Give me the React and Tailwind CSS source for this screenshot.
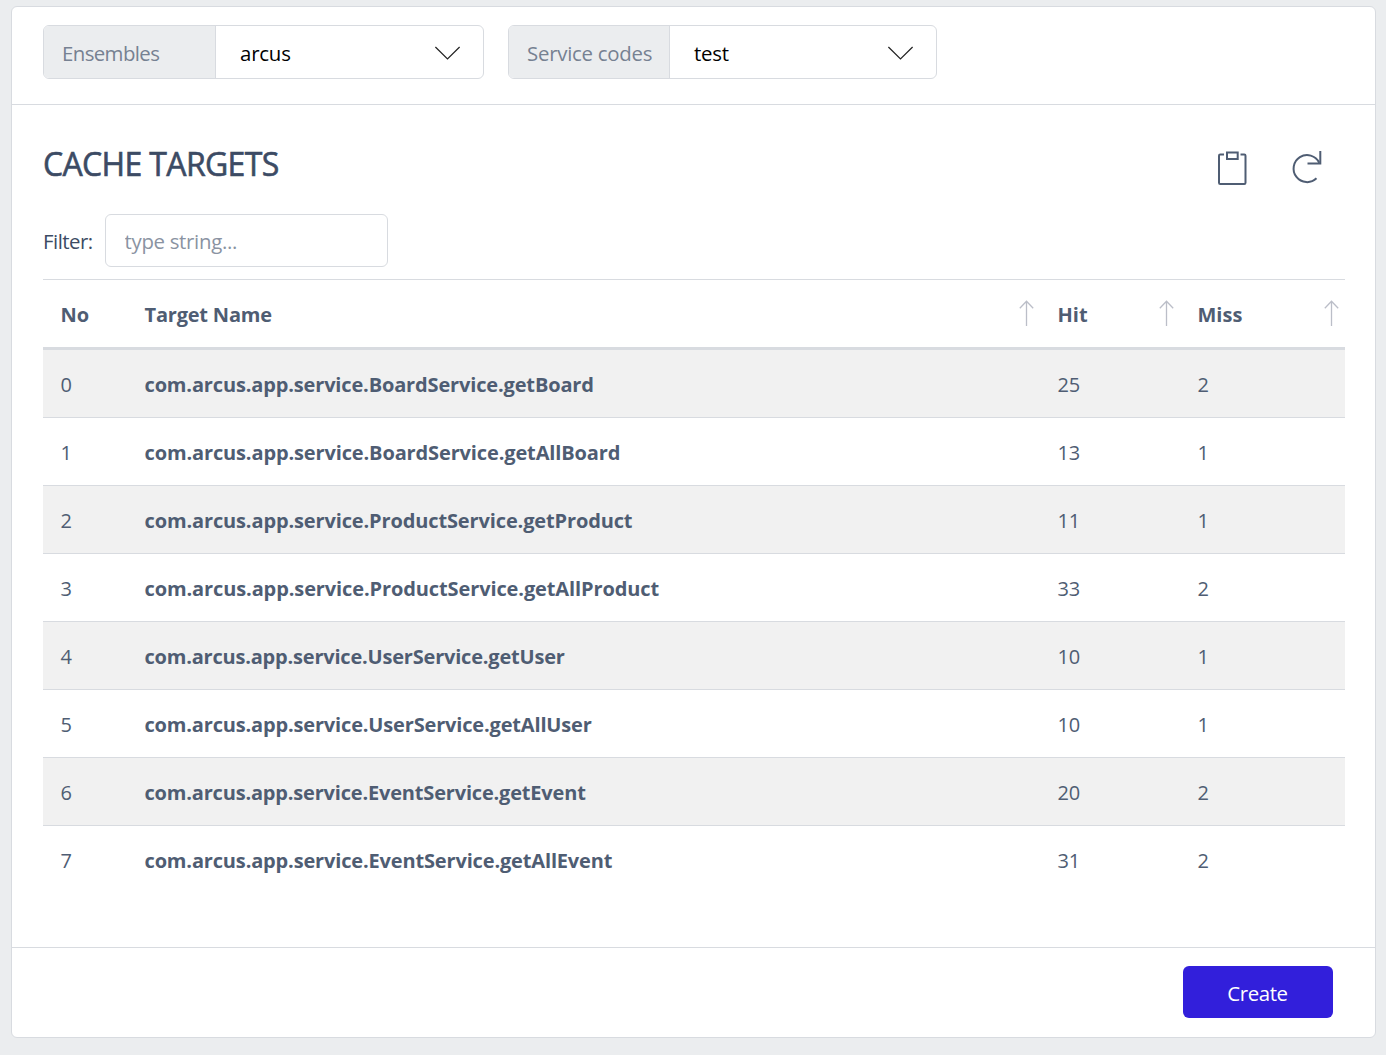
import React from "react";

const rows = [
  ["com.arcus.app.service.BoardService.getBoard", 25, 2, "tracking-[-0.15px]"],
  ["com.arcus.app.service.BoardService.getAllBoard", 13, 1, "tracking-[-0.13px]"],
  ["com.arcus.app.service.ProductService.getProduct", 11, 1, "tracking-[-0.13px]"],
  ["com.arcus.app.service.ProductService.getAllProduct", 33, 2, "tracking-[-0.11px]"],
  ["com.arcus.app.service.UserService.getUser", 10, 1, "tracking-[-0.2px]"],
  ["com.arcus.app.service.UserService.getAllUser", 10, 1, "tracking-[-0.165px]"],
  ["com.arcus.app.service.EventService.getEvent", 20, 2, "tracking-[-0.18px]"],
  ["com.arcus.app.service.EventService.getAllEvent", 31, 2, "tracking-[-0.155px]"],
];

function SelectGroup({ label, value, width, labelWidth }) {
  return (
    <div className={`flex h-[54px] rounded-[6px] border border-[#d8dbe0] overflow-hidden ${width}`}>
      <div className={`flex items-center border-r border-[#d8dbe0] bg-[#ebedef] pl-[18px] pt-[1px] text-[#768192] ${labelWidth}`}>
        <span className="whitespace-nowrap">{label}</span>
      </div>
      <div className="flex flex-1 items-center justify-between pl-[24px] pr-[22px] text-black">
        <span className="pt-[1px] tracking-[-0.2px]">{value}</span>
        <svg className="mt-[2px]" width="28" height="16" viewBox="0 0 28 16" fill="none" stroke="#222" strokeWidth="1.2">
          <path d="M2.400 2 14.500 14 26.600 2" />
        </svg>
      </div>
    </div>
  );
}

function SortArrow() {
  return (
    <svg className="-mt-[2px]" width="16" height="28" viewBox="0 0 16 28" fill="none" stroke="#bbbec8" strokeWidth="1.3">
      <path d="M8.500 2V27M1.800 9.200 8.500 2.300 15.200 9.200" />
    </svg>
  );
}

const cols = "grid grid-cols-[84px_913px_140px_165px]";

export default function App() {
  return (
    <div className="h-[1055px] w-[1386px] bg-[#ebedef] pl-[11px] pt-[6px] font-['Open_Sans','Noto_Sans',sans-serif] text-[20.4px] leading-[30px] text-[#3c4b64]">
      <div className="flex h-[1032px] w-[1365px] flex-col rounded-[6px] border border-[#d8dbe0] bg-white">
        <header className="flex h-[98px] gap-6 border-b border-[#d8dbe0] pl-[31px] pt-[18px]">
          <SelectGroup label="Ensembles" value="arcus" width="w-[441px]" labelWidth="w-[172px] tracking-[-0.6px]" />
          <SelectGroup label="Service codes" value="test" width="w-[429px]" labelWidth="w-[161px] tracking-[-0.25px]" />
        </header>

        <main className="flex flex-1 flex-col pl-[31px] pr-[30px]">
          <div className="flex h-[109px] justify-between">
            <h1 className="pt-[38px] text-[32px] font-medium leading-[42px] tracking-[-0.65px] [-webkit-text-stroke:0.6px_#3c4b64]">CACHE TARGETS</h1>
            <div className="flex gap-[44px] pr-[22px] pt-[45px]">
              <svg width="32" height="36" viewBox="0 0 32 36" fill="none" stroke="#4f5d73" strokeWidth="2">
                <path d="M9 4.500H5.200Q4 4.500 4 5.700V32.800Q4 34 5.200 34H29.300Q30.500 34 30.500 32.800V5.700Q30.500 4.500 29.300 4.500H25.500" />
                <path d="M12 2.500H22.700V9H12Z" />
              </svg>
              <svg width="32" height="36" viewBox="0 0 32 36" fill="none" stroke="#4f5d73" strokeWidth="2">
                <path d="M25.500 28.300A13.500 13.500 0 1 1 28.200 12.700" />
                <path d="M29.300 1V13.500H16.500" />
              </svg>
            </div>
          </div>
          <div className="flex h-[53px] items-center">
            <label className="w-[62px] pt-[1px] tracking-[-0.5px]">Filter:</label>
            <input
              className="h-[53px] w-[283px] rounded-[6px] border border-[#d8dbe0] bg-white pl-[18.5px] pt-[1px] tracking-[-0.3px] outline-none placeholder:text-[#8a93a2] placeholder:opacity-100"
              placeholder="type string..."
            />
          </div>

          <section className="mt-[12px] border-t border-[#d8dbe0] text-[#4f5d73]">
            <div className={`${cols} h-[70px] items-center border-b-[3px] border-[#d8dbe0] text-[20px] font-bold`}>
              <div className="pl-[17.5px] pt-[3px]">No</div>
              <div className="flex items-center justify-between pl-[17.5px] pr-[6px]">
                <span className="pt-[3px] tracking-[-0.2px]">Target Name</span>
                <SortArrow />
              </div>
              <div className="flex items-center justify-between pl-[17.5px] pr-[6px]">
                <span className="pt-[3px]">Hit</span>
                <SortArrow />
              </div>
              <div className="flex items-center justify-between pl-[17.5px] pr-[6px]">
                <span className="pt-[3px]">Miss</span>
                <SortArrow />
              </div>
            </div>
            {rows.map(([name, hit, miss, tracking], i) => (
              <div
                key={name}
                className={`${cols} h-[68px] items-center border-b pt-[3px] text-[20px] ${i % 2 ? "bg-white" : "bg-[#f1f1f1]"} ${i < 7 ? "border-[#d8dbe0]" : "border-transparent"}`}
              >
                <div className="pl-[17.5px]">{i}</div>
                <div className={`pl-[17.5px] font-bold ${tracking}`}>{name}</div>
                <div className="pl-[17.5px] tracking-[-0.2px]">{hit}</div>
                <div className="pl-[17.5px]">{miss}</div>
              </div>
            ))}
          </section>
        </main>

        <footer className="flex h-[90px] justify-end border-t border-[#d8dbe0] pr-[42px] pt-[18px]">
          <button className="h-[52px] w-[150px] rounded-[6px] bg-[#321fdb] pr-[1px] pt-[1px] tracking-[-0.4px] text-white">Create</button>
        </footer>
      </div>
    </div>
  );
}
